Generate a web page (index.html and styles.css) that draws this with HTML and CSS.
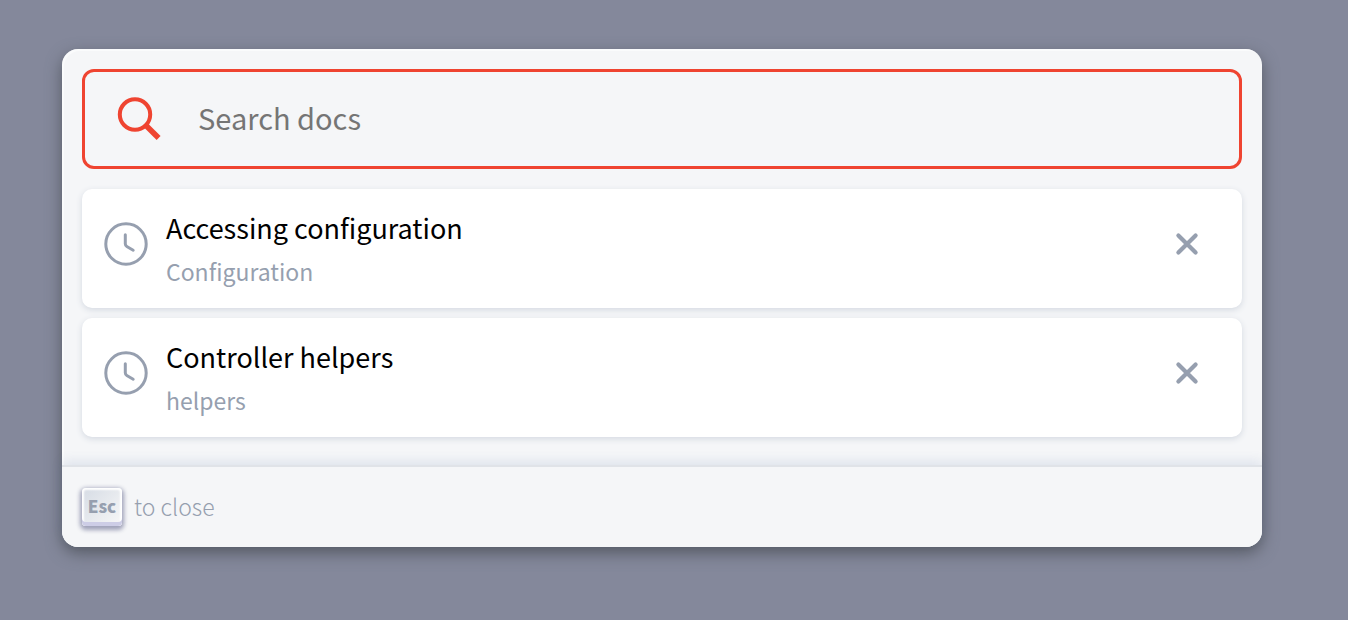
FILE: index.html
```html
<!DOCTYPE html>
<html lang="en">
<head>
<meta charset="utf-8">
<meta name="viewport" content="width=device-width, initial-scale=1">
<title>Search docs</title>
<link rel="stylesheet" href="styles.css">
</head>
<body class="backdrop">
<main class="modal" role="dialog" aria-label="Search docs">
  <form class="search" role="search">
    <label class="search-label" for="query" aria-label="Search docs">
      <svg class="search-icon" viewBox="0 0 48 48" fill="none" stroke="currentColor" aria-hidden="true">
        <circle cx="20" cy="19.5" r="15.2" stroke-width="4"/>
        <path d="M30.5 30L43.6 43.1" stroke-width="5.6"/>
      </svg>
    </label>
    <input class="search-input" id="query" type="search" placeholder="Search docs">
  </form>
  <ul class="hits">
    <li class="hit">
      <svg class="clock" viewBox="0 0 44 44" fill="none" stroke="currentColor" stroke-width="3" stroke-linecap="round" stroke-linejoin="round" aria-hidden="true">
        <circle cx="22" cy="22" r="20.2"/>
        <path d="M21.3 12.8V21.8Q21.3 23.6 22.8 24.5L29.2 28.2"/>
      </svg>
      <a class="hit-link" href="#accessing-configuration">
        <span class="hit-title">Accessing configuration</span>
        <span class="hit-path">Configuration</span>
      </a>
      <button class="remove" type="button" aria-label="Remove Accessing configuration">
        <svg class="cross" viewBox="0 0 24 24" fill="none" stroke="currentColor" stroke-width="4.2" stroke-linecap="round" aria-hidden="true"><path d="M3.4 3.4L20.6 20.6M20.6 3.4L3.4 20.6"/></svg>
      </button>
    </li>
    <li class="hit">
      <svg class="clock" viewBox="0 0 44 44" fill="none" stroke="currentColor" stroke-width="3" stroke-linecap="round" stroke-linejoin="round" aria-hidden="true">
        <circle cx="22" cy="22" r="20.2"/>
        <path d="M21.3 12.8V21.8Q21.3 23.6 22.8 24.5L29.2 28.2"/>
      </svg>
      <a class="hit-link" href="#controller-helpers">
        <span class="hit-title">Controller helpers</span>
        <span class="hit-path">helpers</span>
      </a>
      <button class="remove" type="button" aria-label="Remove Controller helpers">
        <svg class="cross" viewBox="0 0 24 24" fill="none" stroke="currentColor" stroke-width="4.2" stroke-linecap="round" aria-hidden="true"><path d="M3.4 3.4L20.6 20.6M20.6 3.4L3.4 20.6"/></svg>
      </button>
    </li>
  </ul>
  <footer class="footer">
    <kbd class="key">Esc</kbd>
    <span class="hint">to close</span>
  </footer>
</main>
</body>
</html>
```
FILE: styles.css
```css
* {
  box-sizing: border-box;
}

.backdrop {
  margin: 0;
  padding: 49px 86px 49px 62px;
  background: #84889b;
  font-family: "Source Sans Pro", "Noto Sans CJK SC", "Noto Sans", sans-serif;
}

.modal {
  max-width: 1200px;
  padding-top: 20px;
  border-radius: 16px;
  background: #f5f6f8;
  box-shadow: inset 2px 2px 0 0 rgba(255, 255, 255, .5), 0 6px 16px 0 #555a64;
  color: #969faf;
}

.search {
  display: flex;
  align-items: center;
  height: 100px;
  margin: 0 20px;
  padding: 0 30px;
  border: 3px solid #ef4431;
  border-radius: 12px;
  color: #ef4431;
}

.search-label,
.search-icon {
  display: block;
  flex: none;
  width: 48px;
  height: 48px;
}

.search-input {
  flex: 1;
  min-width: 0;
  margin: 0;
  padding: 0 0 4px 35px;
  border: 0;
  outline: 0;
  background: transparent;
  color: #000;
  font: 400 29px/44px "Source Sans Pro", "Noto Sans CJK SC", "Noto Sans", sans-serif;
  appearance: none;
}

.search-input::placeholder {
  color: #757575;
  opacity: 1;
}

.hits {
  display: grid;
  gap: 10px;
  margin: 0;
  padding: 20px 20px 30px;
  list-style: none;
}

.hit {
  display: flex;
  align-items: center;
  padding: 18px 40px 15px 22px;
  border-radius: 10px;
  background: #fff;
  box-shadow: 0 2px 6px 0 #d4d9e1;
}

.clock {
  flex: none;
  width: 44px;
  height: 44px;
  margin-bottom: 12px;
}

.hit-link {
  flex: 1;
  min-width: 0;
  padding-left: 18px;
  color: inherit;
  text-decoration: none;
}

.hit-title,
.hit-path {
  display: block;
}

.hit-title {
  color: #000;
  font-size: 27px;
  line-height: 42px;
}

.hit-path {
  font-size: 23px;
  line-height: 44px;
}

.remove {
  display: grid;
  place-items: center;
  width: 30px;
  height: 30px;
  margin-bottom: 12px;
  padding: 0;
  border: 0;
  background: none;
  color: inherit;
}

.cross {
  width: 24px;
  height: 24px;
}

.footer {
  display: flex;
  align-items: center;
  gap: 12px;
  height: 80px;
  padding: 0 20px;
  border-radius: 0 0 16px 16px;
  background: #f5f6f8;
  box-shadow: 0 -2px 0 0 #e0e3e8, 0 -6px 12px 0 rgba(69, 98, 155, .12);
}

.key {
  width: 40px;
  height: 38px;
  border-radius: 4px;
  background: linear-gradient(-225deg, #d5dbe4, #f8f8f8);
  box-shadow: inset 0 -4px 0 0 #cdcde6, inset 0 0 2px 2px #fff, 0 2px 4px 2px rgba(30, 35, 90, .4);
  font: 900 17px/36px "Source Sans Pro", "Noto Sans CJK SC", "Noto Sans", sans-serif;
  text-align: center;
}

.hint {
  padding-bottom: 2px;
  font-size: 23px;
  font-weight: 300;
  line-height: 36px;
}
```
